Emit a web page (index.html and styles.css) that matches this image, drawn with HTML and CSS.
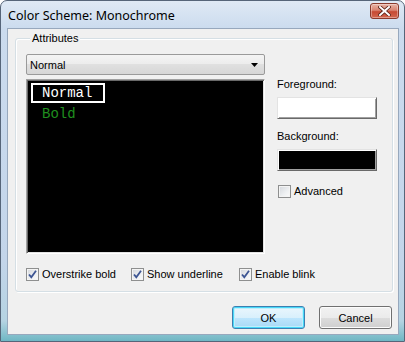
FILE: index.html
```html
<!DOCTYPE html>
<html lang="en">
<head>
  <meta charset="UTF-8" />
  <title>Color Scheme: Monochrome</title>
  <link rel="stylesheet" href="styles.css">
</head>
<body>
  <div class="window">
    <!-- ===== title bar ===== -->
    <div class="titlebar">
      <span class="title">Color Scheme: Monochrome</span>
      <div class="close">
        <svg width="13" height="10" viewBox="0 0 13 10">
          <path d="M2 1 L11 9 M11 1 L2 9" stroke="#5b2318" stroke-width="3.6" stroke-linecap="square" fill="none"/>
          <path d="M2 1 L11 9 M11 1 L2 9" stroke="#ffffff" stroke-width="2" stroke-linecap="square" fill="none"/>
        </svg>
      </div>
    </div>

    <div class="client">
      <!-- ===== Attributes group ===== -->
      <div class="group">
        <div class="group-label">Attributes</div>
        <div class="group-body">
          <div class="main-col">
            <div class="combo">
              <span>Normal</span>
              <svg width="7" height="4" viewBox="0 0 7 4"><path d="M0 0 H7 L3.5 4 Z" fill="#000"/></svg>
            </div>
            <div class="list">
              <div class="item selected">Normal</div>
              <div class="item bold">Bold</div>
            </div>
          </div>

          <div class="side-col">
            <div class="field-label first">Foreground:</div>
            <div class="swatch white"></div>
            <div class="field-label">Background:</div>
            <div class="swatch black"></div>
            <label class="check advanced"><span class="box"></span>Advanced</label>
          </div>
        </div>

        <div class="options">
          <label class="check"><span class="box"><svg width="11" height="11" viewBox="0 0 11 11"><path d="M2 5.5 L4.3 8.2 L9 1.8" stroke="#3d5593" stroke-width="1.8" fill="none"/></svg></span>Overstrike bold</label>
          <label class="check"><span class="box"><svg width="11" height="11" viewBox="0 0 11 11"><path d="M2 5.5 L4.3 8.2 L9 1.8" stroke="#3d5593" stroke-width="1.8" fill="none"/></svg></span>Show underline</label>
          <label class="check"><span class="box"><svg width="11" height="11" viewBox="0 0 11 11"><path d="M2 5.5 L4.3 8.2 L9 1.8" stroke="#3d5593" stroke-width="1.8" fill="none"/></svg></span>Enable blink</label>
        </div>
      </div>

      <!-- ===== dialog buttons ===== -->
      <div class="buttons">
        <button class="btn default">OK</button>
        <button class="btn">Cancel</button>
      </div>
    </div>
  </div>
</body>
</html>
```

FILE: styles.css
```css
body {
  margin: 0;
  font-family: "Liberation Sans", Arial, sans-serif;
  font-size: 11px;
  color: #000;
  background: #fff;
}

/* ===== window frame ===== */
.window {
  width: 405px;
  height: 342px;
  box-sizing: border-box;
  border: 1px solid #566579;
  border-radius: 7px 7px 0 0;
  background: linear-gradient(180deg, #dfe9f5 0, #cbdbee 28px, #c3d5ea 260px, #b5d3e2 320px, #6fb7c4 100%);
  padding: 0 5px 6px 6px;
  display: flex;
  flex-direction: column;
}

.titlebar {
  height: 27px;
  display: flex;
  align-items: flex-start;
  justify-content: space-between;
}

.title {
  margin-top: 6px;
  margin-left: 1px;
  font-family: "Noto Sans", sans-serif;
  font-size: 12.5px;
  color: #000;
}

.close {
  margin-top: 2px;
  width: 29px;
  height: 16px;
  box-sizing: border-box;
  border: 1px solid #8a3a2c;
  border-radius: 3px;
  background: linear-gradient(180deg, #e9b4a6 0, #d98370 45%, #c64a33 55%, #d3674f 100%);
  box-shadow: inset 0 0 0 1px rgba(255, 255, 255, 0.35);
  display: flex;
  align-items: center;
  justify-content: center;
}

.client {
  flex: 1;
  background: #f0f0f0;
  border: 1px solid #97a8bd;
  padding: 0 5px 0 7px;
  display: flex;
  flex-direction: column;
}

/* ===== group box ===== */
.group {
  margin-top: 9px;
  border: 1px solid #d5dfe5;
  border-radius: 3px;
  box-shadow: inset 1px 1px 0 #fff, 1px 1px 0 #fff;
  padding: 0 10px 9px 10px;
}

.group-label {
  width: fit-content;
  margin: -8px 0 0 4px;
  padding: 0 2px;
  line-height: 15px;
  background: #f0f0f0;
}

.group-body {
  display: flex;
  margin-top: 8px;
}

.main-col {
  width: 239px;
}

.combo {
  height: 21px;
  box-sizing: border-box;
  border: 1px solid #9a9a9a;
  border-radius: 2px;
  background: linear-gradient(180deg, #f4f4f4 0, #ececec 50%, #e0e0e0 50%, #d6d6d6 100%);
  display: flex;
  align-items: center;
  justify-content: space-between;
  padding: 0 6px 0 3px;
}

.list {
  margin-top: 4px;
  height: 175px;
  box-sizing: border-box;
  background: #000;
  border: 1px solid;
  border-color: #a0a0a0 #fff #fff #a0a0a0;
  box-shadow: inset 1px 1px 0 #696969, inset -1px -1px 0 #e3e3e3;
  padding: 3px 0 0 4px;
  font-family: "Liberation Mono", "DejaVu Sans Mono", monospace;
  font-size: 14px;
}

.item {
  width: 74px;
  height: 20px;
  box-sizing: border-box;
  border: 2px solid transparent;
  padding-left: 9px;
  line-height: 16px;
  color: #fff;
}

.item.selected {
  border-color: #fff;
}

.item.bold {
  margin-top: 1px;
  color: #1f8f1f;
}

.side-col {
  margin-left: 12px;
  width: 100px;
}

.field-label {
  margin-top: 10px;
  line-height: 15px;
}

.field-label.first {
  margin-top: 23px;
}

.swatch {
  margin-top: 5px;
  height: 22px;
  box-sizing: border-box;
  border: 1px solid;
  border-color: #e3e3e3 #696969 #696969 #e3e3e3;
  box-shadow: inset 1px 1px 0 #fff, inset -1px -1px 0 #a0a0a0;
}

.swatch.white {
  background: #fff;
}

.swatch.black {
  background: #000;
  box-shadow: inset 1px 1px 0 #fff, inset -1px -1px 0 #a0a0a0, inset 2px 2px 0 #000;
}

/* ===== check boxes ===== */
.check {
  display: flex;
  align-items: center;
  line-height: 15px;
  white-space: nowrap;
}

.check .box {
  width: 13px;
  height: 13px;
  box-sizing: border-box;
  border: 1px solid #8e8f8f;
  background: linear-gradient(135deg, #d4d7dc 0, #eef0f2 60%, #fbfbfb 100%);
  box-shadow: inset 0 0 0 1px #f4f4f4;
  margin-right: 3px;
  display: flex;
  align-items: center;
  justify-content: center;
}

.advanced {
  margin-top: 13px;
  margin-left: 1px;
}

.options {
  display: grid;
  grid-template-columns: 105px 108px auto;
  margin-top: 13px;
}

/* ===== buttons ===== */
.buttons {
  display: flex;
  justify-content: flex-end;
  gap: 14px;
  margin-top: 14px;
  margin-right: 1px;
}

.btn {
  width: 73px;
  height: 23px;
  box-sizing: border-box;
  border: 1px solid #707070;
  border-radius: 3px;
  background: linear-gradient(180deg, #f2f2f2 0, #ebebeb 50%, #dddddd 50%, #cfcfcf 100%);
  box-shadow: inset 0 0 0 1px #fcfcfc;
  font-family: inherit;
  font-size: 11px;
  color: #000;
  padding: 0;
}

.btn.default {
  border-color: #3c7fb1;
  background: linear-gradient(180deg, #eaf6fd 0, #d9f0fc 50%, #bee6fd 50%, #a7d9f5 100%);
  box-shadow: inset 0 0 0 1px #48d8f8, inset 0 0 0 2px #bfeefc;
}
```
